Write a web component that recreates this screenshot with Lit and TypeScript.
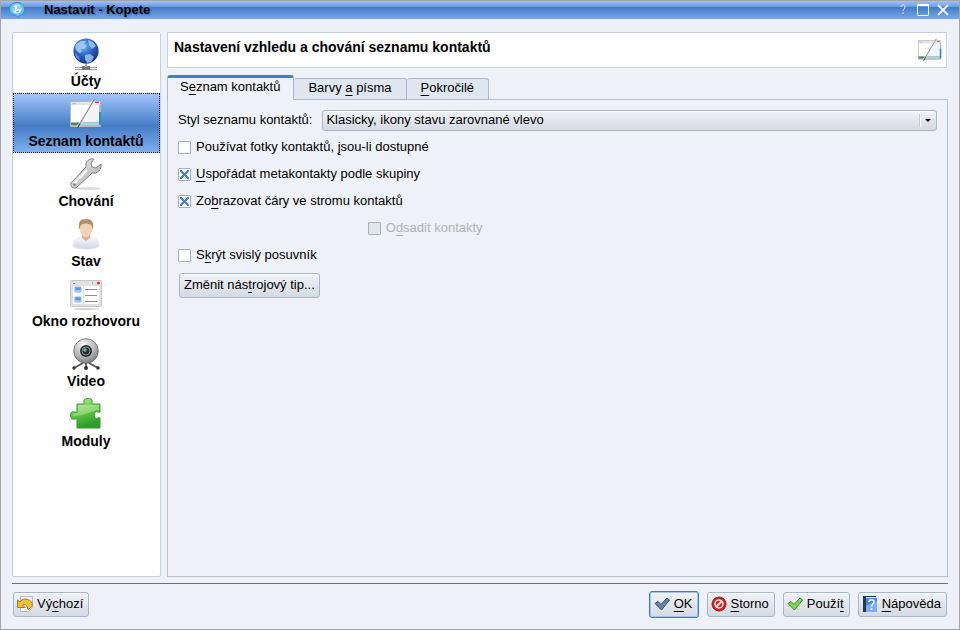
import { LitElement, html, css, svg, nothing } from "lit";
import { customElement, state } from "lit/decorators.js";
import { classMap } from "lit/directives/class-map.js";

const contactListArt = svg`
  <rect x="0" y="3" width="31" height="26" rx="1" fill="#b4bac0"/>
  <path d="M1 4h29v3H1z" fill="#e4e4e4"/>
  <path d="M1 7h28v17H1z" fill="#fff"/>
  <path d="M22 7h7v17H12z" fill="#f2f3f3"/>
  <path d="M1 25h10v2H1z" fill="#3f8f3c"/>
  <path d="M10 25h19v2H10z" fill="#a3dbee"/>
  <path d="M29 14h2v13h-2z" fill="#2e8fc6"/>
  <path d="M25 4h4v1h-4z" fill="#d23b3b"/>
  <path d="M2 5l2 1 2-1" fill="none" stroke="#bbb"/>
  <path d="M23.500 2.500L8 29" stroke="#fff" stroke-width="3" opacity=".5"/>
  <path d="M24.500 1L7.500 30" stroke="#87898c" stroke-width="1.200"/><path d="M10 26L7.500 30" stroke="#4c4f52" stroke-width="1.200"/>`;

const icons: Record<string, unknown> = {
  accounts: svg`
    <defs><radialGradient id="g" cx=".4" cy=".3" r=".75"><stop offset="0" stop-color="#7fb5ee"/><stop offset=".5" stop-color="#2f63c2"/><stop offset="1" stop-color="#152a80"/></radialGradient></defs>
    <path d="M5 29h22v1H5zM5 31h22v1H5z" fill="#9c9c9c"/><path d="M12 28h8v4h-8z" fill="#777"/><path d="M15 25h2v4h-2z" fill="#aaa"/>
    <circle cx="16" cy="13" r="12.6" fill="url(#g)"/>
    <path d="M6 6l5-3 5 0-2 3 3 2-3 3-3 0 1 3-3 1-3-3-1-3zM18 2l5 2 3 4-4 3-3-4zM15 17l5-1 4 3-3 5-4 1-2-4z" fill="#a9d5f6" opacity=".75"/>
    <path d="M5 15l4 4 1 4-4-4z" fill="#5b92de"/>`,
  contacts: contactListArt,
  behavior: svg`
    <ellipse cx="19" cy="30.500" rx="12" ry="1.500" fill="#dcdcdc"/>
    <defs><linearGradient id="w" x1="0" y1="0" x2="1" y2="1"><stop offset="0" stop-color="#f3f3f3"/><stop offset="1" stop-color="#a3a3a3"/></linearGradient></defs>
    <path d="M24 1c-5-1-9 3-8 8L1 25c-1 3 2 6 5 5l16-15c5 1 10-3 9-9l-5 4-4-1-1-4z" fill="url(#w)" stroke="#838383"/>
    <path d="M17 12L4 26" stroke="#fff" stroke-width="2"/><circle cx="4.500" cy="26.500" r="1.200" fill="#777"/>`,
  status: svg`
    <defs><linearGradient id="s" x1="0" y1="0" x2="0" y2="1"><stop offset="0" stop-color="#f7f8fc"/><stop offset="1" stop-color="#cfd5e2"/></linearGradient></defs>
    <path d="M3 28c0-6 3-8 9-9h8c6 1 9 3 9 9-2 4-24 4-26 0z" fill="url(#s)" stroke="#dfe2ea" stroke-width=".7"/>
    <path d="M12 16h8v4l-4 3-4-3z" fill="#dfb396"/><ellipse cx="16" cy="11" rx="6" ry="8" fill="#f2d1b8"/>
    <path d="M9 12C8 4 10 1 16 1s8 3 7 11l-2-5c-3-2-7-2-10 0z" fill="#b58e6c"/>`,
  chat: svg`
    <ellipse cx="16" cy="31" rx="13" ry="1" fill="#d4d4d4"/>
    <rect x=".5" y="2.500" width="31" height="26" rx="1" fill="#e1e1e1" stroke="#c6c6c6"/>
    <path d="M3 8h10v18H3zM14 8h15v18H14z" fill="#fff"/>
    <path d="M5 9h6v5H5zM5 19h6v5H5z" fill="#5b95ea" stroke="#8bb4f2"/><path d="M5 12h6v2H5zM5 22h6v2H5z" fill="#9cc1f6"/>
    <path d="M15 11.500h12M15 17.500h12M15 23.500h12" stroke="#8c8c8c"/><circle cx="28.500" cy="5" r="1.500" fill="#d93636"/><path d="M22 5h1M3 5l1 1 1-1" stroke="#888" fill="none"/>`,
  video: svg`
    <defs><radialGradient id="v" cx=".4" cy=".25" r=".8"><stop offset="0" stop-color="#fafafa"/><stop offset=".6" stop-color="#b5b5b5"/><stop offset="1" stop-color="#777"/></radialGradient></defs>
    <path d="M13 25L4 30M19 25l9 5M16 25v5" stroke="#555" stroke-width="1.800"/><circle cx="4" cy="30" r="1.700" fill="#333"/><circle cx="28" cy="30" r="1.700" fill="#333"/><circle cx="16" cy="30" r="2" fill="#333"/>
    <circle cx="16" cy="13" r="12.300" fill="url(#v)" stroke="#666" stroke-width=".8"/>
    <circle cx="16" cy="13" r="6" fill="#252a2c"/><circle cx="16" cy="13" r="4" fill="none" stroke="#8b9496"/><circle cx="15" cy="12" r="1.700" fill="#64b5b5"/>`,
  plugins: svg`
    <defs><linearGradient id="p" x1="0" y1="0" x2=".3" y2="1"><stop offset="0" stop-color="#b9ec9c"/><stop offset=".5" stop-color="#65cb45"/><stop offset="1" stop-color="#2e9c2a"/></linearGradient></defs>
    <path d="M7 6h7c1-1-1-2 0-4 2-2 7-2 8 0 1 2-1 3 0 4h8v8c-1 1-3-1-5 0-1 2-1 5 0 6 2 1 4-1 5 0v10H7v-9c-1-1-3 1-5 0-2-2-2-6 0-7 2-1 4 1 5 0z" fill="url(#p)" stroke="#3a9d32"/>
    <path d="M8 7h21v5c-7 0-13 6-26 6 0-4 3-3 5-3z" fill="#fff" opacity=".3"/>`,
};

const smallIcons: Record<string, unknown> = {
  undo: svg`<path d="M3.500.5h12v11l-4 4h-8z" fill="#f3f3f5" stroke="#b9bac4"/>
    <path d="M.5 4v7.500H8L5.500 9c3-1.500 4.500 0 5.500 4.500 7-3 5-10-3-10.500-2 0-4 1-5 3z" fill="#ecc136" stroke="#a4791c"/>`,
  ok: svg`<path d="M1 7.500l3-2 3 3 6-6.500 2.500 2L7.500 14z" fill="#6585a8" stroke="#344e6c"/>`,
  cancel: svg`<circle cx="8" cy="8" r="7" fill="#cf2424" stroke="#981818"/><circle cx="8" cy="8" r="4" fill="none" stroke="#f3e5e5" stroke-width="1.500"/><path d="M5 11l6-6" stroke="#f3e5e5" stroke-width="2"/>`,
  apply: svg`<path d="M1 7.500l3-2 3 3 6-6.500 2.500 2L7.500 14z" fill="#7fd650" stroke="#338a23"/>`,
  help: svg`<path d="M1 0h13v16H1z" fill="#22384e"/><path d="M4 2h11v14H4z" fill="#4a8be0"/><path d="M4 1h10v1H4z" fill="#dce8f5"/><path d="M4 10l11-5v11H4z" fill="#79b0f2"/>
    <path d="M7 6c0-3 5-3 5 0 0 2-2.500 2-2.500 4.500M9.500 12v2" fill="none" stroke="#fff" stroke-width="1.500"/>`,
};

interface Page { id: string; label: string }

const pages: Page[] = [
  { id: "accounts", label: "Účty" },
  { id: "contacts", label: "Seznam kontaktů" },
  { id: "behavior", label: "Chování" },
  { id: "status", label: "Stav" },
  { id: "chat", label: "Okno rozhovoru" },
  { id: "video", label: "Video" },
  { id: "plugins", label: "Moduly" },
];

const tabs = ["S&eznam kontaktů", "Barvy &a písma", "&Pokročilé"];

/** Underlines the letter that follows the ampersand. */
const mnemonic = (text: string) => {
  const at = text.indexOf("&");
  return at < 0
    ? html`<span>${text}</span>`
    : html`<span>${text.slice(0, at)}<u>${text[at + 1]}</u>${text.slice(at + 2)}</span>`;
};

@customElement("app-root")
export class AppRoot extends LitElement {
  @state() private page = "contacts";
  @state() private tab = 0;

  static styles = css`
    :host {
      display: flex;
      flex-direction: column;
      box-sizing: border-box;
      min-height: 100vh;
      border: 1px solid #a3a4a7;
      background: #eef1f7;
      color: #000;
      font: 13px/16px "Liberation Sans", Arial, sans-serif;
    }
    * { box-sizing: border-box; }
    svg { display: block; flex: none; }
    button, select { font: inherit; color: inherit; margin: 0; }
    u { text-decoration-skip-ink: none; text-underline-offset: 3px; text-decoration-thickness: 1px; }
    .titlebar {
      display: flex;
      align-items: center;
      height: 18px;
      padding: 0 10px 0 8px;
      background: linear-gradient(#a3c2f5, #6a9ae0 33%, #437dc8 36%, #78a9ea);
    }
    .title {
      flex: 1;
      margin: 0 0 0 19px;
      font-weight: bold;
      text-shadow: 1px 1px 2px #3560a0;
    }
    .controls { display: flex; gap: 8px; }
    .control { padding: 0; border: 0; background: none; }
    .body {
      flex: 1;
      display: grid;
      grid-template-columns: 149px 1fr;
      column-gap: 6px;
      padding: 13px 11px 6px;
    }
    .pages {
      display: flex;
      flex-direction: column;
      background: #fff;
      border: 1px solid #c4d0dd;
      border-radius: 2px;
    }
    .page {
      display: flex;
      flex-direction: column;
      align-items: center;
      height: 60px;
      padding: 4px 1px 0 0;
      border: 1px solid transparent;
      background: none;
      font-size: 14px;
      font-weight: bold;
      gap: 3px;
    }
    .page.active {
      border: 1px dotted #000;
      background: linear-gradient(#a3c5fa, #437cc5 55%, #7fb0ef);
    }
    .content { display: flex; flex-direction: column; min-width: 0; }
    .heading {
      display: flex;
      justify-content: space-between;
      align-items: center;
      height: 36px;
      margin-right: 1px;
      padding: 0 4px 0 6px;
      background: #fff;
      border: 1px solid #c4d0dd;
      box-shadow: 1px 1px #fff;
    }
    .heading h1 { margin: 0 0 6px; font-size: 14px; line-height: 16px; }
    .tabs { display: flex; align-items: flex-end; height: 25px; margin-top: 7px; }
    .tab {
      height: 22px;
      padding: 0 14px 2px;
      border: 1px solid #a8b8cf;
      border-radius: 3px 3px 0 0;
      border-left-width: 0;
      background: #dfe6ef;
    }
    .tab.active {
      height: 25px;
      border-top: 3px solid #437fcd;
      border-bottom: 0;
      border-left-width: 1px;
      background: #eef1f7;
      padding: 0 13px 4px 12px;
    }
    .panel {
      flex: 1;
      display: flex;
      flex-direction: column;
      gap: 6px;
      padding: 10px;
      border: 1px solid #b5c3d0;
      border-top: 0;
    }
    .tabs::after { content: ""; flex: 1; border-top: 1px solid #b5c3d0; }
    .row { display: flex; align-items: center; gap: 10px; height: 21px; }
    .row > label > span, .row > label[for] { padding-bottom: 2px; }
    .nested { padding-left: 25%; }
    .row.disabled { color: #aeb1b6; }
    .check { display: flex; align-items: center; gap: 5px; }
    .check input {
      appearance: none;
      flex: none;
      width: 13px;
      height: 13px;
      margin: 0;
      border: 1px solid #a3b2ca;
      border-radius: 1px;
      background: #fff;
    }
    .check input:checked {
      background:
        linear-gradient(45deg, transparent 41%, #4a84d0 43%, #4a84d0 57%, transparent 59%) center / 9px 9px no-repeat,
        linear-gradient(-45deg, transparent 41%, #4a84d0 43%, #4a84d0 57%, transparent 59%) center / 9px 9px no-repeat,
        #fff;
    }
    .check input:disabled { background: #dfe6ef; border-color: #a9b1bb; }
    .combo { flex: 1; display: grid; align-items: center; }
    .combo > * { grid-area: 1 / 1; }
    .combo select {
      appearance: none;
      width: 100%;
      height: 21px;
      padding: 0 20px 2px 3px;
    }
    .arrow { justify-self: end; pointer-events: none; }
    .combo select, .button {
      border: 1px solid #a8b6cc;
      border-radius: 3px;
      background: linear-gradient(#f0f2f6, #d5dae2);
      box-shadow: inset 0 1px #fff;
    }
    .button {
      display: flex;
      align-items: center;
      gap: 4px;
      height: 25px;
      padding: 0 5px 2px 3px;
    }
    .tip { align-self: flex-start; margin: 1px; padding: 0 4px 2px; }
    .actions {
      display: flex;
      align-items: center;
      gap: 8px;
      margin: 0 11px;
      padding: 7px 1px 11px;
      border-top: 1px solid #61748a;
    }
    .default { height: 27px; border-color: #4577b8; box-shadow: inset 0 0 0 1px #a6c2e8; padding-left: 4px; }
    .spacer { flex: 1; }
  `;

  private check(label: string, checked = false, disabled = false) {
    return html`<div class=${classMap({ row: true, nested: disabled, disabled })}>
      <label class="check"><input type="checkbox" ?checked=${checked} ?disabled=${disabled}>${mnemonic(label)}</label>
    </div>`;
  }

  private action(label: string, icon: string, isDefault = false) {
    return html`<button class=${classMap({ button: true, default: isDefault })}>
      <svg width="16" height="16" viewBox="0 0 16 16" aria-hidden="true">${smallIcons[icon]}</svg>${mnemonic(label)}
    </button>`;
  }

  render() {
    return html`
      <header class="titlebar">
        <svg width="16" height="16" viewBox="0 0 16 16" aria-hidden="true">
          <path d="M8 .5c5 0 7.500 3 7.500 6.500 0 4-2 6-5 6.500L9 16l-2-2.500C3 13 .5 11 .5 7S3 .5 8 .5z" fill="#66c1ec" stroke="#3a87c5"/>
          <circle cx="8" cy="7" r="4.500" fill="#d5eefb"/><path d="M5 5v4M9 4v3M11 4v3M7 10l3-1" stroke="#5ba9da" stroke-width="1" fill="none"/>
        </svg>
        <p class="title">Nastavit - Kopete</p>
        <div class="controls">
          <button class="control" aria-label="Nápověda k oknu"><svg width="12" height="12" viewBox="0 0 12 12"><path d="M4 3c0-3 4-3 4 0 0 2-2 2-2 4M6 8v2" fill="none" stroke="#dce8ff"/></svg></button>
          <button class="control" aria-label="Maximalizovat"><svg width="12" height="12" viewBox="0 0 12 12"><path d="M.5 1v10.500h11V1M0 1h12" fill="none" stroke="#f1f4f8"/><path d="M0 1h12" stroke="#fff" stroke-width="2"/></svg></button>
          <button class="control" aria-label="Zavřít"><svg width="12" height="12" viewBox="0 0 12 12"><path d="M1 1l10 10M11 1L1 11" stroke="#edf1f7" stroke-width="2"/></svg></button>
        </div>
      </header>

      <main class="body">
        <nav class="pages">
          ${pages.map((p) => html`
            <button class=${classMap({ page: true, active: p.id === this.page })}
              aria-current=${p.id === this.page ? "page" : nothing}
              @click=${() => (this.page = p.id)}>
              <svg width="32" height="32" viewBox="0 0 32 32" aria-hidden="true">${icons[p.id]}</svg>
              <span>${p.label}</span>
            </button>`)}
        </nav>

        <section class="content">
          <header class="heading">
            <h1>Nastavení vzhledu a chování seznamu kontaktů</h1>
            <svg width="24" height="24" viewBox="0 0 32 32" aria-hidden="true">${contactListArt}</svg>
          </header>
          <div class="tabs" role="tablist">
            ${tabs.map((t, i) => html`
              <button class=${classMap({ tab: true, active: i === this.tab })} role="tab"
                aria-selected=${i === this.tab} @click=${() => (this.tab = i)}>${mnemonic(t)}</button>`)}
          </div>
          <div class="panel" role="tabpanel">
            <div class="row">
              <label for="style">Styl seznamu kontaktů:</label>
              <div class="combo">
                <select id="style"><option>Klasicky, ikony stavu zarovnané vlevo</option></select>
                <svg class="arrow" width="18" height="15" viewBox="0 0 18 15" aria-hidden="true">
                  <path d="M1.500 1v13" stroke="#fff"/><path d="M.5 1v13" stroke="#c5cbd4"/><path d="M6 6h6L9 9z" fill="#000"/>
                </svg>
              </div>
            </div>
            ${this.check("Používat fotky kontaktů, &jsou-li dostupné")}
            ${this.check("&Uspořádat metakontakty podle skupiny", true)}
            ${this.check("Zo&brazovat čáry ve stromu kontaktů", true)}
            ${this.check("O&dsadit kontakty", false, true)}
            ${this.check("S&krýt svislý posuvník")}
            <button class="button tip">${mnemonic("Změnit nás&trojový tip...")}</button>
          </div>
        </section>
      </main>

      <footer class="actions">
        ${this.action("Vý&chozí", "undo")}
        <div class="spacer"></div>
        ${this.action("&OK", "ok", true)}
        ${this.action("&Storno", "cancel")}
        ${this.action("Použí&t", "apply")}
        ${this.action("&Nápověda", "help")}
      </footer>
    `;
  }
}
